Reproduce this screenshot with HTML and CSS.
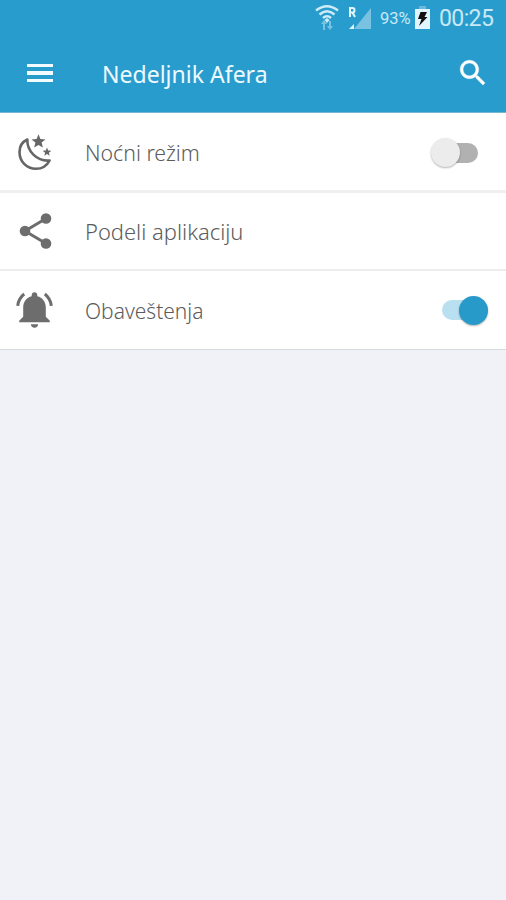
FILE: index.html
```html
<!DOCTYPE html>
<html lang="sr">
<head>
    <meta charset="UTF-8">
    <meta name="viewport" content="width=device-width, initial-scale=1.0">
    <title>Nedeljnik Afera</title>
    <link rel="stylesheet" href="styles.css">
</head>
<body>
    <header class="header">
        <div class="status-bar">
            <svg class="wifi" width="24" height="27" viewBox="0 0 24 27">
                <g fill="none" stroke="#d0ecf8" stroke-width="2.4">
                    <path d="M1 7.5Q12-1 23 7.5"/>
                    <path d="M4.5 11.5Q12 5 19.5 11.5"/>
                    <path d="M8 15Q12 11.500 16 15"/>
                </g>
                <path fill="#d0ecf8" d="M12 15l2.5 2-2.500 3-2.500-3z"/>
                <path fill="#79c2e2" d="M9 17l3 4h-2v6H8v-6H6zM15 27l-3-4h2v-5h2v5h2z"/>
            </svg>
            <svg class="signal" width="24" height="26" viewBox="0 0 24 26">
                <path fill="#79c2e2" d="M23 3v21H6z"/>
                <path fill="#e3f5fc" d="M6 19v5H1z"/>
                <path fill="none" stroke="#e3f5fc" stroke-width="2" d="M2 12V3h2.5q2 0 2 2.2t-2 2.3H2M4.5 7.5L7 12"/>
            </svg>
            <span class="battery-level">93%</span>
            <svg class="battery" width="15" height="23" viewBox="0 0 15 23">
                <path fill="#6db8d8" d="M4 0h7v3H4z"/>
                <path fill="#e3f5fc" d="M0 3h15v20H0z"/>
                <path fill="#111" d="M5.5 6H12L9.5 11h3L4 20l2.5-7H3z"/>
            </svg>
            <span class="clock">00:25</span>
        </div>
        <div class="toolbar">
            <div class="menu">
                <span></span>
                <span></span>
                <span></span>
            </div>
            <h1 class="title">Nedeljnik Afera</h1>
            <svg class="search" width="34" height="34" viewBox="0 0 24 24">
                <path fill="#fff" stroke="#fff" stroke-width=".3" d="M15.5 14h-.79l-.28-.27C15.41 12.59 16 11.11 16 9.5 16 5.91 13.09 3 9.5 3S3 5.91 3 9.5 5.91 16 9.5 16c1.61 0 3.09-.59 4.23-1.57l.27.28v.79l5 4.99L20.49 19l-4.99-5zm-6 0C7.01 14 5 11.99 5 9.5S7.01 5 9.5 5 14 7.01 14 9.5 11.99 14 9.5 14z"/>
            </svg>
        </div>
    </header>

    <main class="settings">
        <div class="row row-night">
            <svg class="icon" width="40" height="40" viewBox="0 0 40 40">
                <path fill="none" stroke="#666" stroke-width="2.6" stroke-linejoin="round" d="M12.300 6.500C7 9 4.500 13.500 4.500 19 4.500 28.500 11.500 35.800 21 35.800 27 35.800 32 32.500 34.600 27.500 22 28.500 12 18.500 12.300 6.500z"/>
                <path fill="#666" d="M23.500 1.300l1.900 4.700 5.100.4-3.900 3.200 1.300 5-4.400-2.700-4.300 2.700 1.200-5-3.900-3.200 5.100-.4z"/>
                <path fill="#666" d="M32 14.500l1.200 2.900 3.200.3-2.500 2 .8 3.100-2.700-1.700-2.700 1.700.8-3.100-2.500-2 3.200-.3z"/>
            </svg>
            <span class="label label-night">Noćni režim</span>
            <div class="switch">
                <div class="thumb"></div>
            </div>
        </div>
        <div class="row row-share">
            <svg class="icon icon-share" width="40" height="40" viewBox="0 0 40 40">
                <path fill="none" stroke="#6d6d6d" stroke-width="3" d="M30 7.5L9 20l21 12.5"/>
                <g fill="#6d6d6d">
                    <circle cx="30" cy="7.5" r="5.3"/>
                    <circle cx="9" cy="20" r="5.3"/>
                    <circle cx="30" cy="32.5" r="5.3"/>
                </g>
            </svg>
            <span class="label label-share">Podeli aplikaciju</span>
        </div>
        <div class="row row-notify">
            <svg class="icon" width="40" height="40" viewBox="0 0 40 40">
                <g fill="none" stroke="#6d6d6d" stroke-width="3">
                    <path d="M9.2 4Q3.5 8.5 2.7 15.8"/>
                    <path d="M29.8 4Q35.5 8.5 36.3 15.8"/>
                </g>
                <path fill="#6d6d6d" d="M19.5 2.3c1.7 0 2.8 1.2 2.8 2.8v1.1c5.200 1.300 8.500 5.400 8.500 11.200v9.300l4 4v1.500H4.200v-1.500l4-4v-9.300c0-5.800 3.300-9.900 8.500-11.200V5.100c0-1.600 1.100-2.800 2.800-2.800z"/>
                <path fill="#6d6d6d" d="M15.8 34.200h7.400c-.2 2-1.700 3.500-3.700 3.500s-3.500-1.500-3.700-3.500z"/>
            </svg>
            <span class="label label-notify">Obaveštenja</span>
            <div class="switch switch-on">
                <div class="thumb"></div>
            </div>
        </div>
    </main>
</body>
</html>
```

FILE: styles.css
```css
* {
    box-sizing: border-box;
}
body {
    margin: 0;
    min-height: 900px;
    background-color: #f0f2f7;
    font-family: "Noto Sans", "Open Sans", sans-serif;
}
svg {
    display: block;
    flex: none;
}
.header {
    height: 113px;
    background-color: #289dcd;
    border-bottom: 1px solid #78b5d0;
}
.status-bar {
    display: flex;
    align-items: center;
    height: 36px;
    padding-left: 315px;
    color: #c9e8f5;
    font-family: Roboto, sans-serif;
    white-space: nowrap;
}
.wifi {
    margin-top: -4px;
}
.signal {
    margin-left: 9px;
}
.battery-level {
    width: 35px;
    margin-left: 8px;
    font-size: 16.5px;
}
.battery {
    margin-top: -2px;
}
.clock {
    margin-left: 9px;
    font-size: 23px;
    letter-spacing: -0.6px;
}
.toolbar {
    display: flex;
    align-items: center;
    height: 74px;
    padding: 0 16px 0 27px;
}
.menu {
    display: flex;
    flex-direction: column;
    gap: 4px;
    width: 26px;
}
.menu span {
    height: 3.5px;
    background-color: #f2fbff;
}
.title {
    flex: 1;
    margin: 1px 0 0 49px;
    color: #eefaff;
    font-size: 23.5px;
    font-weight: 400;
    white-space: nowrap;
    transform: scaleX(0.98);
    transform-origin: left;
}
.row {
    display: flex;
    align-items: center;
    padding: 0 18px 0 15px;
    background-color: #fff;
}
.row-night {
    height: 80px;
    padding-top: 2px;
    border-bottom: 3px solid #f0f0f0;
}
.row-share {
    height: 78px;
    border-bottom: 2px solid #ececec;
}
.row-notify {
    height: 79px;
    border-bottom: 1px solid #d9dadd;
}
.icon-share {
    position: relative;
    left: 1px;
}
.label {
    flex: 1;
    margin-left: 30px;
    color: #5c5c5c;
    font-size: 21.5px;
    font-weight: 300;
    white-space: nowrap;
    transform-origin: left;
}
.label-night {
    transform: scaleX(0.99);
}
.label-share {
    transform: scaleX(1.02);
}
.label-notify {
    transform: scaleX(0.975);
}
.switch {
    display: flex;
    align-items: center;
    width: 36px;
    height: 20px;
    margin-right: 10px;
    border-radius: 10px;
    background-color: #b1b1b1;
}
.thumb {
    flex: none;
    width: 29px;
    height: 29px;
    margin-left: -11px;
    border-radius: 50%;
    background-color: #ececec;
    box-shadow: 0 1px 2px rgba(0, 0, 0, 0.3);
}
.switch-on {
    width: 46px;
    margin-right: 0;
    justify-content: flex-end;
    background-color: #b8e0f1;
}
.switch-on .thumb {
    margin-left: 0;
    background-color: #289ac9;
}
```
